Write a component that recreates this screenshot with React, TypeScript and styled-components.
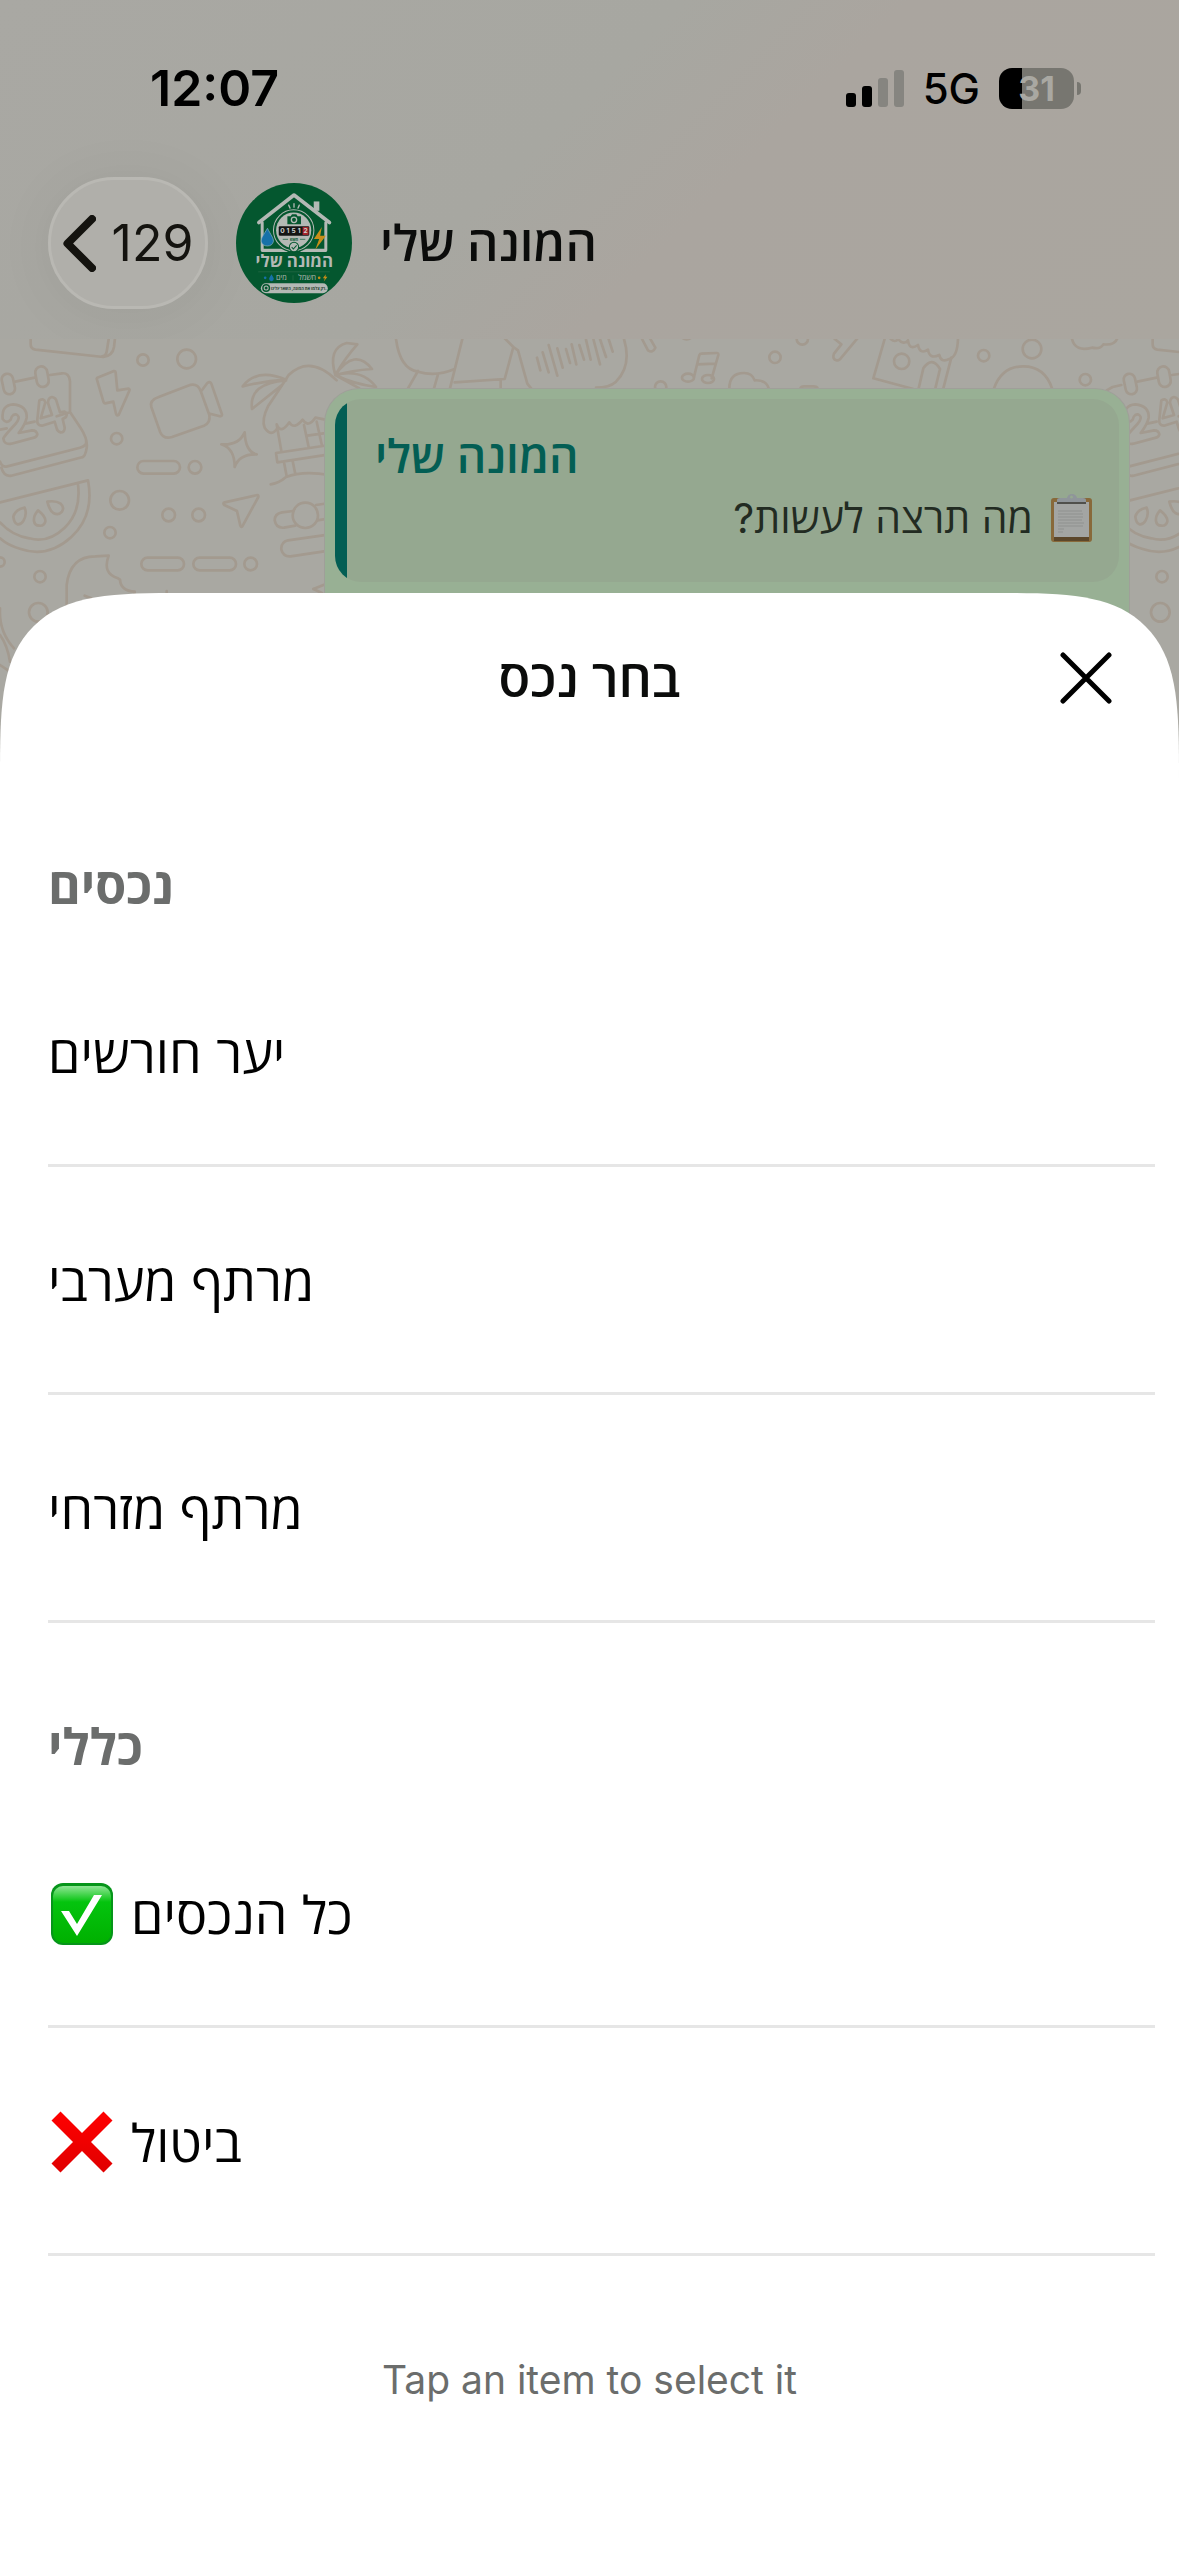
import React, {FC, ReactNode, useCallback, useState} from 'react';
import styled, {createGlobalStyle} from 'styled-components';

const Colors = {
  black: '#000000',
  ink: '#0b0c0b',
  white: '#ffffff',
  grey500: '#6b6d6c',
  grey100: '#e6e6e6',
  wall: '#a9a8a2',
  doodle: '#a39a8f',
  bubble: '#98b094',
  quote: '#95a890',
  teal: '#035e54',
  avatar: '#04572f',
};

const FONT = '"Inter", "Open Sans", "Noto Sans", sans-serif';

type Item = {
  id: string;
  title: string;
  icon?: ReactNode;
};

type Section = {
  title: string;
  items: Item[];
};

const CheckEmoji: FC = () => (
  <svg width="65" height="62" viewBox="-3 0 65 62" aria-hidden="true">
    <defs>
      <linearGradient id="check-fill" x1="0" y1="0" x2="0" y2="1">
        <stop offset="0" stopColor="#8fe695" />
        <stop offset="0.28" stopColor="#04c40e" />
        <stop offset="1" stopColor="#00b000" />
      </linearGradient>
    </defs>
    <rect width="62" height="62" rx="12" fill="#06951a" />
    <rect x="2" y="3" width="58" height="57" rx="10" fill="url(#check-fill)" />
    <path d="M10 28h8l8 13 17-29h8L26 53z" fill="#fff" />
  </svg>
);

const CrossEmoji: FC = () => (
  <svg width="65" height="62" viewBox="-3 0 65 62" aria-hidden="true">
    <defs>
      <linearGradient id="cross-fill" x1="0" y1="0" x2="0" y2="1">
        <stop offset="0" stopColor="#ff0000" />
        <stop offset="1" stopColor="#e00000" />
      </linearGradient>
    </defs>
    <path
      d="M9.500 0.500 31 22 52.500 0.500 61.500 9.500 40 31l21.500 21.500-9 9L31 40 9.500 61.500l-9-9L22 31 0.500 9.500z"
      fill="url(#cross-fill)"
    />
  </svg>
);

const ClipboardEmoji: FC = () => (
  <svg width="42" height="48" viewBox="0 0 42 48" aria-hidden="true">
    <rect x="0" y="4" width="41" height="44" rx="3" fill="#88693a" />
    <rect x="3" y="43" width="35" height="4" fill="#5c472b" />
    <rect x="3" y="8" width="35" height="35" fill="#a3a5a3" />
    <path d="M7 17h24M7 20h25M7 23h25M7 26h24M7 29h26M7 32h25M7 35h6M7 38h5" stroke="#8f918f" strokeWidth="1" />
    <rect x="6" y="8" width="29" height="2" fill="#50504c" />
    <path d="M6 8V6q0-2 3-2h7q1-4 5-4t5 4h6q3 0 3 2v2z" fill="#8f959a" />
    <circle cx="20.500" cy="3" r="1.500" fill="#95a890" />
  </svg>
);

const SignalIcon: FC = () => (
  <svg width="58" height="37" viewBox="0 0 58 37" role="img" aria-label="Signal">
    <rect x="0" y="23" width="10" height="14" rx="3" fill="#000" />
    <rect x="16" y="16" width="10" height="21" rx="3" fill="#000" />
    <rect x="32" y="8" width="10" height="29" rx="3" fill="#868580" />
    <rect x="48" y="0" width="10" height="37" rx="3" fill="#868580" />
  </svg>
);

const AvatarArt: FC = () => (
  <svg width="116" height="120" viewBox="47 37 350 358" preserveAspectRatio="none" role="img" aria-label="המונה שלי">
    <ellipse cx="222" cy="216" rx="175" ry="179" fill={Colors.avatar} />
    <g fill="none" stroke="#b4b9b5" strokeWidth="9" strokeLinejoin="round" strokeLinecap="round">
      <path d="M290 120V92" strokeWidth="17" strokeLinecap="butt" />
      <path d="M116 155 222 73 329 155" strokeWidth="11" />
      <path d="M126 155V238H200M244 238H318V155" />
    </g>
    <circle cx="221" cy="178" r="66" fill={Colors.avatar} />
    <circle cx="221" cy="178" r="61" fill="none" stroke="#b4b9b5" strokeWidth="3" />
    <circle cx="221" cy="178" r="53" fill="#b4b9b5" />
    <path d="M206 103l4 9M222 99v10M238 103l-4 9" stroke="#b4b9b5" strokeWidth="4" strokeLinecap="round" />
    <path d="M202 136h10l4-6h13l4 6h10v24h-41z" fill={Colors.avatar} />
    <circle cx="222" cy="147" r="8" fill="none" stroke="#b4b9b5" strokeWidth="4" />
    <rect x="176" y="166" width="92" height="28" rx="3" fill="#131515" />
    <rect x="248" y="168" width="18" height="24" fill="#a5252b" />
    <g fill="#d0d2d0" fontSize="20" fontWeight="700" textAnchor="middle">
      <text x="187" y="187">0</text>
      <text x="204" y="187">1</text>
      <text x="221" y="187">5</text>
      <text x="238" y="187">1</text>
      <text x="257" y="187">2</text>
    </g>
    <path d="M188 205h16M240 205h16" stroke={Colors.avatar} strokeWidth="2" />
    <text x="222" y="209" fontSize="11" fontWeight="700" textAnchor="middle" fill={Colors.avatar}>kWh</text>
    <circle cx="222" cy="228" r="14" fill="#b4b9b5" stroke={Colors.avatar} strokeWidth="3" />
    <path d="M215 228l5 6 10-11" fill="none" stroke={Colors.avatar} strokeWidth="3" />
    <path d="M142 172c-12 20-19 28-19 39a19 18 0 0 0 37 0c0-11-8-19-18-39z" fill="#1671a8" stroke="#8fb4c4" strokeWidth="2" />
    <path d="M306 168l-24 36h16l-12 32 32-42h-17z" fill="#c88e18" />
    <text x="223" y="288" fontSize="51" fontWeight="700" textAnchor="middle" fill="#b4b9b5">המונה שלי</text>
    <path d="M114 302h216M219 312v16" stroke="#2b6c49" strokeWidth="2" />
    <g fontSize="22" fill="#b4b9b5" textAnchor="middle">
      <text x="184" y="327">מים</text>
      <text x="262" y="327">חשמל</text>
    </g>
    <circle cx="135" cy="320" r="4" fill="#1671a8" />
    <path d="M154 309c-5 8-7 11-7 14a7 7 0 0 0 14 0c0-3-2-6-7-14z" fill="#1671a8" />
    <circle cx="298" cy="320" r="4" fill="#c88e18" />
    <path d="M318 309l-9 12h6l-3 10 11-14h-6z" fill="#c88e18" />
    <rect x="122" y="336" width="202" height="30" rx="15" fill="#b4b9b5" />
    <circle cx="138" cy="350" r="12" fill={Colors.avatar} />
    <circle cx="138" cy="350" r="6" fill="none" stroke="#b4b9b5" strokeWidth="3" />
    <text x="236" y="356" fontSize="12" fontWeight="700" textAnchor="middle" fill="#1d3a2a">רק צלמו את המונה, השאר עלינו.</text>
  </svg>
);

// drawn at three units per pixel; the tile repeats every 3366 units
const DoodleTile: FC = () => (
  <>
    <path d="M92 0v28q0 14 14 16l204 22q28-4 32-30l4-36M328 0l-8 50q-2 12-14 14" />
    <path d="M150 120l36-5q22-2 24 24v92l32 48q22 34 18 60t-14 28L34 422q-22 4-30-24M46 140l58-12M210 232l-40 12M0 284l20-4M76 266l28-6M0 380q6 18 22 14l218-56q22-6 18-20" />
    <rect x="8" y="116" width="34" height="62" rx="17" transform="rotate(-12 25 147)" />
    <rect x="108" y="94" width="36" height="62" rx="18" transform="rotate(-10 126 125)" />
    <path d="M8 252q-4-42 32-44 42 4 40 40-4 20-24 46l40-8q14 0 16 12-2 8-10 10l-68 18q-22 4-24-16 4-8 28-34 20-20 18-30-6-12-16-6-6 4-8 14-12 14-24-2z" />
    <path d="M118 196q14-8 18 6l-14 48 34-10-12-36q0-16 12-18 12 2 14 14l10 32 14-2q10 4 4 16l-10 6 6 26q0 14-12 14-10-2-12-12l-6-20-38 12q-16 0-14-18z" />
    <path d="M292 128l50-20q5 0 5 6l5 52 34-5q4 2 2 6l-32 73q-6 4-8-4l-8-36-24 5q-5 0-6-6l-20-68z" />
    <circle cx="429" cy="75" r="17" />
    <circle cx="560" cy="72" r="28" />
    <circle cx="350" cy="311" r="17" />
    <path d="M476 186l88-34q28-10 38 16l26 72q4 24-16 32l-96 34q-26 8-36-16l-26-74q-6-20 22-30zM604 168l18-24q8-6 12 2l32 92q0 6-6 6l-30-8" />
    <path d="M734 292q2 58 36 66-52-2-66 38 0-56-40-68 52 4 70-36z" />
    <rect x="412" y="378" width="128" height="38" rx="19" />
    <circle cx="585" cy="397" r="19" />
    <path d="M0 502l264-66q20 106-50 170T62 642Q24 632 0 610M234 448q10 82-40 130T88 610Q36 602 0 562" />
    <path d="M40 545q6-22 34-27 8 20-4 40-8 12-18 10-10-4-12-23zM114 526q24 18 22 34-4 14-18 12-14 0-16-14-2-16 12-32zM142 500q26-4 40 6 12 10 4 24-10 12-26 4-12-8-18-34z" />
    <circle cx="359" cy="496" r="28" />
    <circle cx="330" cy="593" r="17" />
    <circle cx="506" cy="540" r="19" />
    <circle cx="596" cy="540" r="19" />
    <path d="M674 502l98-22q4 0 3 6l-48 88q-4 4-6-2l-10-44-38-18q-6-6 1-8z" />
    <rect x="424" y="668" width="128" height="38" rx="19" />
    <rect x="580" y="668" width="128" height="38" rx="19" />
    <circle cx="752" cy="687" r="19" />
    <circle cx="0" cy="681" r="14" />
    <circle cx="120" cy="725" r="17" />
    <circle cx="115" cy="832" r="28" />
    <path d="M200 860v-110q10-86 86-86l40-2q-20 54 28 68l6 4q2 34 44 36v30M254 782l20 8M500 768v14M940 762l36-14M940 762l26 12" />
    <path d="M0 820q-4 70 42 120M0 900q22 30 30 80M0 990l30 20" />
    <path d="M1010 136q-80-78-144-16-18 28-62 94-20 40-10 64 20 30 38 2l-2-12q12 32 38-6 14 24 40-8 16 26 38-6l30 6" />
    <path d="M728 154q42-56 130-20-66 4-130 20zM858 136q-112 8-102 86 38-30 88-70" />
    <path d="M832 280l12 68M912 270l14 66M950 260l16 72M922 302l70-10M828 354l160-24M828 354l4 28 156-24M852 382l8 42M878 378l8 40M812 448q26-4 46-22 50-20 130-6" />
    <path d="M880 528l-34 4q-22 4-22 24 4 24 28 22l34-6M948 510l40-6M952 556l36-6M990 598l-126 18q-22 6-20 28 6 22 28 20l120-18" />
    <circle cx="916" cy="541" r="38" />
    <path d="M1006 120q-24-80 34-96l32 4q-36 40-66 92 58-84 110-18-60 4-110 18 80-20 122 36-70-10-122-36l72 40" />
    <path d="M1188 12q12 90 66 98 54 16 110-8M1390 0l-40 160M1254 108l-30 52M1314 118l-12 42M1364 142l150-10 26-96-30-30M1540 36l14 10 28 100 16 20M1502 134v30" />
    <path d="M1611 68l10 38M1628 52l18 60M1646 30l26 92M1672 40l16 58M1698 42l12 42M1715 28l14 60M1738 30l14 44M1758 14l14 60M1780 12l20 76M1800 12l18 54M1826 12l12 38" />
    <path d="M1872 12q24 80-24 128-20 18-60 18" />
    <path d="M1926 12l18 34q14 10 22-8l-16-28" />
    <path d="M2082 126l16-66q2-4 6-4l46-2q6 0 5 6l-20 70M2092 88l54-2" />
    <ellipse cx="2064" cy="128" rx="18" ry="12" />
    <ellipse cx="2124" cy="132" rx="18" ry="12" />
    <circle cx="1982" cy="156" r="17" />
    <path d="M2188 160q0-46 44-46 24 0 32 22 34-2 42 24M2402 158q2-4 10-4h28q10 0 12 4M2046 8q14 10 28 0" />
    <circle cx="2325" cy="67" r="17" />
    <circle cx="2407" cy="12" r="17" />
    <path d="M2504 12l20 16-22 28q-6 18 8 20 8 2 14-8l50-60" />
    <path d="M2654 12l-34 118 120 32M2756 160l14-60q26-38 50 2l-14 58M2830 160l24-92" />
    <path d="M2672 12q14 12 22 0 18 20 30 4 4 32 30 14 6 30 30 14 4 30 34 16 4 24 30 12 24-6 26-60" />
    <circle cx="2705" cy="79" r="23" />
    <circle cx="2951" cy="62" r="17" />
    <circle cx="3096" cy="42" r="28" />
    <circle cx="3256" cy="134" r="17" />
    <path d="M2982 160q24-66 88-66t86 66M3216 12q10 40 60 26 24 6 34-10 34 4 42-18" />
    <path d="M3320 166l18-10 26-6" />
  </>
);

const Doodles: FC = () => (
  <Wallpaper viewBox="0 12 3537 1362" preserveAspectRatio="xMinYMin slice" aria-hidden="true">
    <g fill="none" stroke={Colors.doodle} strokeWidth="8" strokeLinecap="round" strokeLinejoin="round">
      <DoodleTile />
      <g transform="translate(3366 0)">
        <DoodleTile />
      </g>
    </g>
  </Wallpaper>
);

const SECTIONS: Section[] = [
  {
    title: 'נכסים',
    items: [
      {id: 'forest', title: 'יער חורשים'},
      {id: 'west', title: 'מרתף מערבי'},
      {id: 'east', title: 'מרתף מזרחי'},
    ],
  },
  {
    title: 'כללי',
    items: [
      {id: 'all', title: 'כל הנכסים', icon: <CheckEmoji />},
      {id: 'cancel', title: 'ביטול', icon: <CrossEmoji />},
    ],
  },
];

const App: FC = () => {
  const [selected, setSelected] = useState<string | null>(null);

  const handleSelect = useCallback((id: string) => setSelected(id), []);

  return (
    <>
      <GlobalStyle />
      <Screen>
        <TopBar>
          <StatusBar>
            <Clock>12:07</Clock>
            <StatusIcons>
              <SignalIcon />
              <Network>5G</Network>
              <Battery>31</Battery>
            </StatusIcons>
          </StatusBar>
          <ChatNav>
            <BackButton type="button" aria-label="Back, 129 unread">
              <svg width="33" height="57" viewBox="0 0 33 57" aria-hidden="true">
                <path d="M29 4 4.500 28.500 29 53" fill="none" stroke="#14130f" strokeWidth="8" strokeLinecap="round" strokeLinejoin="round" />
              </svg>
              129
            </BackButton>
            <AvatarArt />
            <ChatName>המונה שלי</ChatName>
          </ChatNav>
        </TopBar>
        <Chat>
          <Doodles />
          <Bubble>
            <Quote>
              <QuoteAuthor>המונה שלי</QuoteAuthor>
              <QuoteText dir="rtl">
                <ClipboardEmoji />
                מה תרצה לעשות?
              </QuoteText>
            </Quote>
          </Bubble>
        </Chat>
        <Sheet role="dialog" aria-labelledby="sheet-title">
          <SheetHeader>
            <SheetTitle id="sheet-title">בחר נכס</SheetTitle>
            <CloseButton type="button" aria-label="Close">
              <svg width="52" height="52" viewBox="0 0 52 52" aria-hidden="true">
                <path d="M3 3l46 46M49 3 3 49" stroke="#000" strokeWidth="5" strokeLinecap="round" />
              </svg>
            </CloseButton>
          </SheetHeader>
          {SECTIONS.map(({title, items}) => (
            <section key={title}>
              <SectionTitle>{title}</SectionTitle>
              <List>
                {items.map(({id, title: itemTitle, icon}) => (
                  <li key={id}>
                    <ItemButton type="button" aria-pressed={selected === id} onClick={() => handleSelect(id)}>
                      {icon}
                      {itemTitle}
                    </ItemButton>
                  </li>
                ))}
              </List>
            </section>
          ))}
          <Hint>Tap an item to select it</Hint>
        </Sheet>
      </Screen>
    </>
  );
};

const GlobalStyle = createGlobalStyle`
  * {
    box-sizing: border-box;
  }

  body {
    margin: 0;
    font-family: ${FONT};
    color: ${Colors.black};
    background: ${Colors.white};
  }

  button {
    border: none;
    background: none;
    font: inherit;
    color: inherit;
    cursor: pointer;
  }

  svg {
    flex-shrink: 0;
  }
`;

const Screen = styled.main`
  display: flex;
  flex-direction: column;
  min-height: 100vh;
`;

const TopBar = styled.header`
  padding: 58px 48px 30px;
  background: linear-gradient(135deg, #a9a8a3 0%, #a7a7a1 45%, #aaa59f 60%, #aaa69f 100%);
`;

const StatusBar = styled.div`
  display: flex;
  align-items: center;
  justify-content: space-between;
  height: 60px;
  padding: 0 50px 0 102px;
`;

const Clock = styled.span`
  font-size: 50px;
  font-weight: 600;
`;

const StatusIcons = styled.div`
  display: flex;
  align-items: center;
  gap: 19px;
`;

const Network = styled.span`
  font-size: 42px;
  font-weight: 500;
`;

const Battery = styled.span`
  position: relative;
  width: 75px;
  height: 41px;
  margin-right: 7px;
  border-radius: 13px;
  font-size: 34px;
  font-weight: 700;
  line-height: 41px;
  text-align: center;
  color: ${Colors.wall};
  background: linear-gradient(to right, ${Colors.black} 31%, #777670 31%);

  &::after {
    content: '';
    position: absolute;
    top: 14px;
    right: -7px;
    width: 4px;
    height: 13px;
    border-radius: 0 4px 4px 0;
    background: #777670;
  }
`;

const ChatNav = styled.nav`
  display: flex;
  align-items: center;
  gap: 28px;
  margin-top: 59px;
`;

const BackButton = styled.button`
  display: flex;
  align-items: center;
  justify-content: center;
  gap: 16px;
  width: 160px;
  height: 132px;
  padding: 0;
  border: 3px solid #b9b8b3;
  border-radius: 66px;
  font-size: 50px;
  color: #14130f;
  background: #b0afaa;
  box-shadow: 0 4px 60px rgba(0, 0, 0, 0.06);
`;

const ChatName = styled.h1`
  margin: 0;
  padding-bottom: 3px;
  font-size: 49px;
  font-weight: 600;
  color: ${Colors.ink};
`;

const Chat = styled.div`
  position: relative;
  flex-shrink: 0;
  height: 454px;
  padding: 50px 50px 0 325px;
  background: ${Colors.wall};
`;

const Wallpaper = styled.svg`
  position: absolute;
  inset: 0;
  width: 100%;
  height: 100%;
`;

const Bubble = styled.article`
  position: relative;
  height: 280px;
  padding: 10px;
  border-radius: 34px;
  background: ${Colors.bubble};
  box-shadow: 0 0 0 1px #9f9f99;
`;

const Quote = styled.blockquote`
  margin: 0;
  padding: 26px 26px 33px 40px;
  border-radius: 26px;
  line-height: 62px;
  background: linear-gradient(to right, ${Colors.teal} 12px, ${Colors.quote} 12px);
`;

const QuoteAuthor = styled.div`
  font-size: 46px;
  font-weight: 600;
  color: ${Colors.teal};
`;

const QuoteText = styled.div`
  display: flex;
  align-items: center;
  gap: 18px;
  font-size: 41px;
  color: #222b22;
`;

const Sheet = styled.section`
  position: relative;
  flex-grow: 1;
  margin-top: -200px;
  border-radius: 118px 118px 0 0;
  background: ${Colors.white};

  @supports (corner-shape: superellipse(1.7)) {
    border-radius: 185px 185px 0 0;
    corner-shape: superellipse(1.8);
  }
`;

const SheetHeader = styled.div`
  display: grid;
  grid-template-columns: 1fr auto 1fr;
  align-items: center;
  height: 169px;
  padding: 0 67px;
`;

const SheetTitle = styled.h2`
  grid-column: 2;
  margin: 0;
  padding-bottom: 3px;
  font-size: 52px;
  font-weight: 600;
  color: ${Colors.ink};
`;

const CloseButton = styled.button`
  display: flex;
  justify-self: end;
  padding: 0;
`;

const SectionTitle = styled.h3`
  margin: 0;
  padding: 88px 48px 17px;
  font-size: 50px;
  font-weight: 700;
  line-height: 72px;
  color: ${Colors.grey500};
`;

const List = styled.ul`
  margin: 0;
  padding: 0 24px 0 48px;
  list-style: none;
`;

const ItemButton = styled.button`
  display: flex;
  align-items: center;
  gap: 18px;
  width: 100%;
  height: 228px;
  padding: 2px 0 0;
  border-bottom: 3px solid ${Colors.grey100};
  font-size: 52px;
`;

const Hint = styled.p`
  margin: 0;
  padding: 96px 24px;
  font-size: 39px;
  line-height: 56px;
  text-align: center;
  color: ${Colors.grey500};
`;

export default App;
